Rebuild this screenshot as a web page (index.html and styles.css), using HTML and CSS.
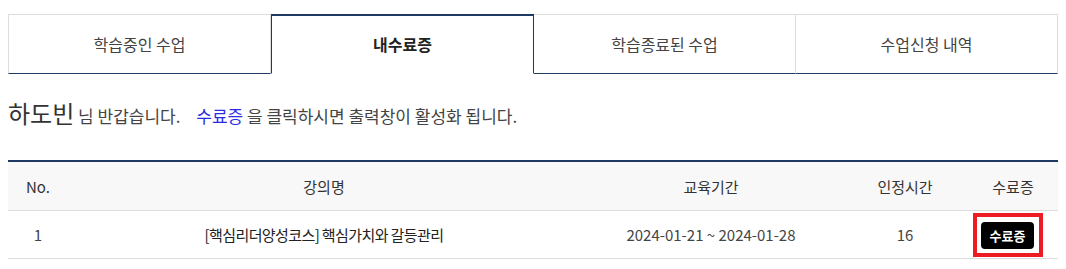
FILE: index.html
```html
<!DOCTYPE html>
<html>
  <head>
    <meta charset="utf-8" />
    <title>내수료증</title>
    <meta name="viewport" content="width=device-width, initial-scale=1" />
    <link rel="stylesheet" href="styles.css">
  </head>

  <body>
    <ul class="tabs">
      <li class="tab">학습중인 수업</li>
      <li class="tab active">내수료증</li>
      <li class="tab">학습종료된 수업</li>
      <li class="tab">수업신청 내역</li>
    </ul>

    <p class="greeting">
      <span class="name">하도빈</span> 님 반갑습니다.
      <span class="link">수료증</span> 을 클릭하시면 출력창이 활성화 됩니다.
    </p>

    <table class="list">
      <colgroup>
        <col class="c-no" />
        <col class="c-title" />
        <col class="c-period" />
        <col class="c-hours" />
        <col />
      </colgroup>
      <thead>
        <tr>
          <th>No.</th>
          <th>강의명</th>
          <th>교육기간</th>
          <th>인정시간</th>
          <th>수료증</th>
        </tr>
      </thead>
      <tbody>
        <tr>
          <td>1</td>
          <td class="title">[핵심리더양성코스] 핵심가치와 갈등관리</td>
          <td>2024-01-21 ~ 2024-01-28</td>
          <td>16</td>
          <td>
            <span class="mark"><button class="cert">수료증</button></span>
          </td>
        </tr>
      </tbody>
    </table>
  </body>
</html>
```

FILE: styles.css
```css
body {
  margin: 8px;
  background: #fff;
  color: #333;
  font-family: "Noto Sans CJK KR", "Noto Sans", sans-serif;
}

.tabs {
  display: flex;
  list-style: none;
  margin: 6px 0 0;
  padding: 0;
  width: 1050px;
}

.tab {
  flex: 1;
  height: 58px;
  line-height: 58px;
  text-align: center;
  font-size: 16px;
  color: #444;
  border: 1px solid #ddd;
  border-left: none;
  border-bottom: 1px solid #1e3a63;
}

.tab:first-child {
  border-left: 1px solid #ddd;
}

.tab.active {
  border: 1px solid #1e3a63;
  border-top: 2px solid #1e3a63;
  border-bottom: 1px solid #fff;
  height: 57px;
  line-height: 57px;
  font-weight: 700;
  color: #222;
}

.tab.active + .tab {
  border-left: none;
}

.greeting {
  margin: 0;
  padding: 24px 0 0;
  height: 32px;
  line-height: 30px;
  font-size: 17px;
  color: #444;
}

.name {
  font-size: 24px;
  color: #333;
}

.link {
  color: #2b2be6;
  margin-left: 12px;
}

.list {
  width: 1050px;
  margin-top: 30px;
  border-collapse: collapse;
  border-top: 2px solid #1e3a63;
  font-size: 15px;
}

.c-no {
  width: 60px;
}

.c-title {
  width: 512px;
}

.c-period {
  width: 262px;
}

.c-hours {
  width: 126px;
}

.list th {
  height: 48px;
  padding: 0;
  background: #f8f8f8;
  font-weight: 400;
  color: #333;
  border-bottom: 1px solid #ddd;
}

.list td {
  height: 47px;
  padding: 0;
  text-align: center;
  color: #444;
  border-bottom: 1px solid #ddd;
}

.list td.title {
  color: #222;
  letter-spacing: -0.6px;
}

.mark {
  display: inline-block;
  vertical-align: middle;
  margin-right: 10px;
  border: 4px solid #ed1c24;
  padding: 5px 5px 4px 4px;
}

.cert {
  display: block;
  width: 53px;
  height: 27px;
  padding: 0;
  border: none;
  border-radius: 4px;
  background: #000;
  color: #fff;
  font-family: "Noto Sans CJK KR", sans-serif;
  font-size: 13px;
  font-weight: 700;
}
```
